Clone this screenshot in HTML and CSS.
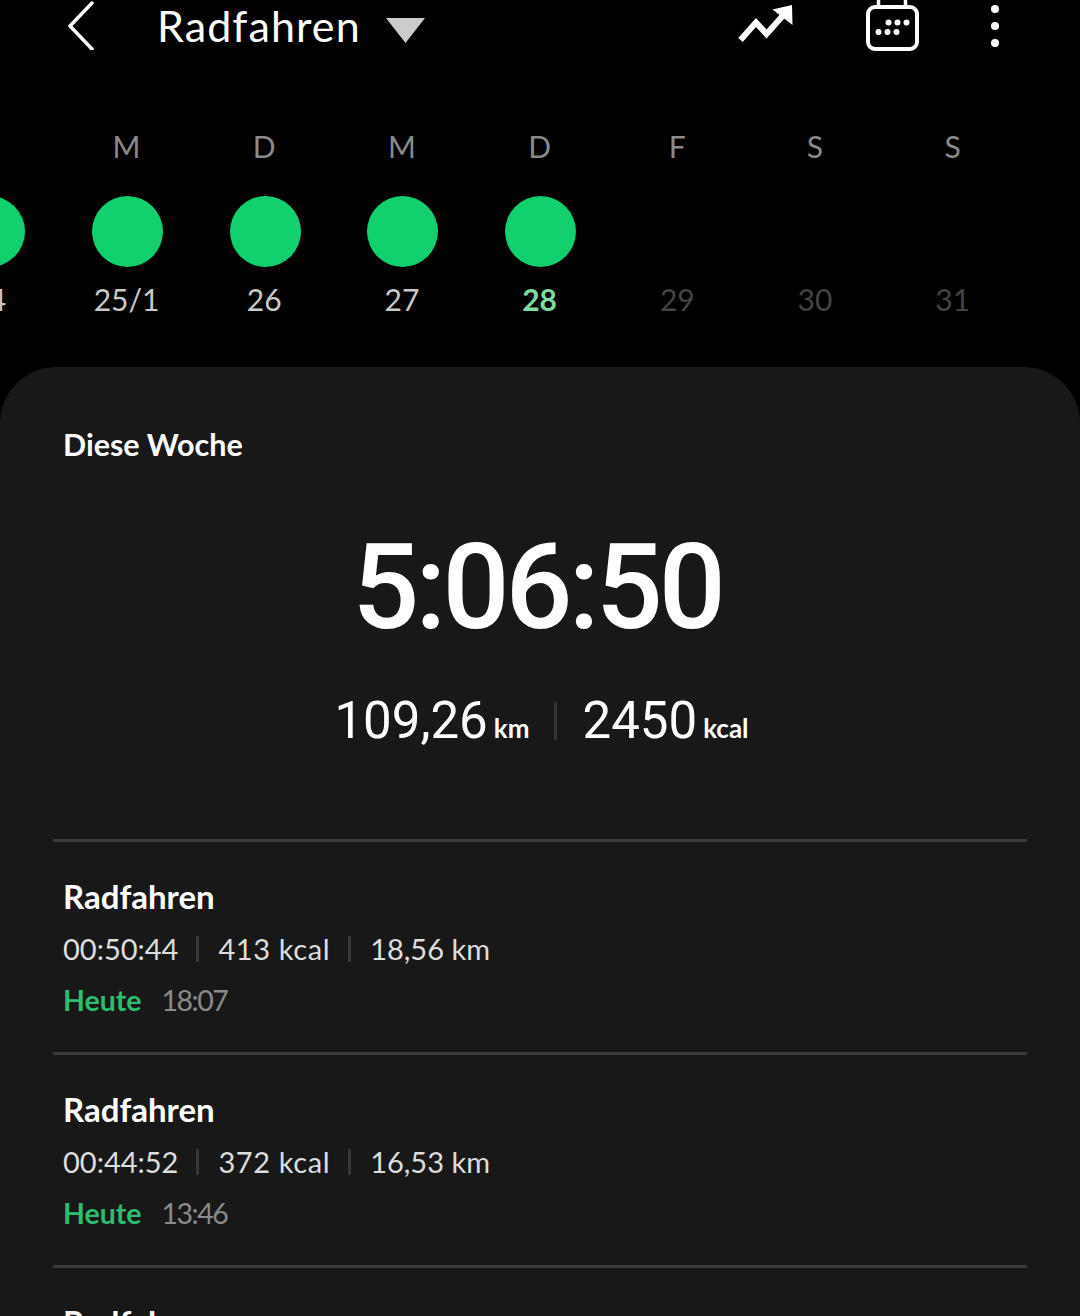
FILE: index.html
```html
<!DOCTYPE html>
<html lang="de">
<head>
  <meta charset="UTF-8">
  <title>Radfahren</title>
  <link rel="stylesheet" href="styles.css">
</head>
<body>
  <div class="header">
    <svg class="back" width="28" height="50" viewBox="0 0 28 50"><path d="M25 3 L3 26 L25 49" fill="none" stroke="#fff" stroke-width="3.5" stroke-linecap="round" stroke-linejoin="round"/></svg>
    <div class="title">Radfahren</div>
    <svg class="caret" width="40" height="26" viewBox="0 0 40 26"><path d="M0 0 H39 L19.500 25 Z" fill="#ccc"/></svg>
    <svg class="trend" width="56" height="40" viewBox="738 4 56 40"><path d="M740.500 40 L756 22.500 L766.500 34 L783 15.500" fill="none" stroke="#fff" stroke-width="6"/><path d="M792 5 L772.500 9.500 L792.500 25 Z" fill="#fff"/></svg>
    <svg class="cal" width="54" height="52" viewBox="865 0 54 52"><path d="M878.500 6 V0 M905.500 6 V0" stroke="#fff" stroke-width="3.500"/><rect x="868" y="7" width="49" height="42" rx="7" fill="none" stroke="#fff" stroke-width="4"/><g fill="#fff"><circle cx="888.500" cy="22.500" r="3"/><circle cx="897.500" cy="22.500" r="3"/><circle cx="906.500" cy="22.500" r="3"/><circle cx="878.500" cy="32" r="3"/><circle cx="887.500" cy="32" r="3"/><circle cx="896.500" cy="32" r="3"/></g></svg>
    <svg class="more" width="10" height="44" viewBox="0 0 10 44"><circle cx="5" cy="5" r="4" fill="#fff"/><circle cx="5" cy="22" r="4" fill="#fff"/><circle cx="5" cy="39" r="4" fill="#fff"/></svg>
  </div>

  <div class="week">
    <div class="day"><div class="letter"></div><div class="dot"></div><div class="date">24</div></div>
    <div class="day"><div class="letter">M</div><div class="dot"></div><div class="date">25/1</div></div>
    <div class="day"><div class="letter">D</div><div class="dot"></div><div class="date">26</div></div>
    <div class="day"><div class="letter">M</div><div class="dot"></div><div class="date">27</div></div>
    <div class="day"><div class="letter">D</div><div class="dot"></div><div class="date today">28</div></div>
    <div class="day"><div class="letter">F</div><div class="nodot"></div><div class="date future">29</div></div>
    <div class="day"><div class="letter">S</div><div class="nodot"></div><div class="date future">30</div></div>
    <div class="day"><div class="letter">S</div><div class="nodot"></div><div class="date future">31</div></div>
  </div>

  <div class="panel">
    <div class="panel-title">Diese Woche</div>
    <div class="total-time">5:06:50</div>
    <div class="totals">
      <span class="num">109,26</span><span class="unit">km</span>
      <span class="sep"></span>
      <span class="num">2450</span><span class="unit">kcal</span>
    </div>

    <div class="ride">
      <div class="ride-name">Radfahren</div>
      <div class="ride-stats"><span class="s1">00:50:44</span><span class="bar"></span><span class="s2">413 kcal</span><span class="bar"></span><span>18,56 km</span></div>
      <div class="ride-when"><span class="when">Heute</span><span class="clock">18:07</span></div>
    </div>
    <div class="ride">
      <div class="ride-name">Radfahren</div>
      <div class="ride-stats"><span class="s1">00:44:52</span><span class="bar"></span><span class="s2">372 kcal</span><span class="bar"></span><span>16,53 km</span></div>
      <div class="ride-when"><span class="when">Heute</span><span class="clock">13:46</span></div>
    </div>
    <div class="ride">
      <div class="ride-name">Radfahren</div>
    </div>
  </div>
</body>
</html>
```

FILE: styles.css
```css
* {
  box-sizing: border-box;
}
html, body {
  margin: 0;
  height: 1316px;
  overflow: hidden;
  background-color: #000;
  color: #fff;
  font-family: "Lato", "Noto Sans", sans-serif;
}
.header {
  display: flex;
  align-items: flex-start;
  height: 55px;
}
.back {
  margin: 0 0 0 67px;
}
.title {
  margin-left: 62px;
  font-size: 43px;
  line-height: 52px;
  width: 229px;
  letter-spacing: 1.1px;
}
.caret {
  margin-top: 18px;
}
.trend {
  margin: 4px 0 0 312px;
}
.cal {
  margin-left: 71px;
}
.more {
  margin: 4px 0 0 71px;
}
.week {
  display: flex;
  margin: 76px 0 0 -79px;
}
.day {
  flex: 0 0 137.700px;
  display: flex;
  flex-direction: column;
  align-items: center;
}
.letter {
  height: 32px;
  margin-right: 2px;
  font-size: 30px;
  line-height: 30px;
  color: #8a8a8a;
}
.dot, .nodot {
  width: 71px;
  height: 71px;
  margin-top: 33px;
  border-radius: 50%;
}
.dot {
  background-color: #12d06e;
}
.date {
  margin: 14px 2px 0 0;
  font-size: 30px;
  line-height: 36px;
  color: #c8c8c8;
}
.today {
  font-weight: 700;
  color: #7fdc9e;
}
.future {
  color: #444;
}
.panel {
  margin-top: 50px;
  height: 949px;
  padding: 0 53px;
  overflow: hidden;
  background-color: #181818;
  border-radius: 56px 56px 0 0;
}
.panel-title {
  padding: 56px 0 0 10px;
  font-size: 30.500px;
  line-height: 42px;
  font-weight: 700;
}
.total-time {
  margin-top: 62px;
  padding-right: 6px;
  height: 122px;
  font-family: "Roboto", sans-serif;
  font-size: 118px;
  font-weight: 500;
  line-height: 122px;
  letter-spacing: -4px;
  text-align: center;
}
.totals {
  display: flex;
  justify-content: center;
  align-items: baseline;
  margin-top: 42px;
  height: 148px;
  line-height: 60px;
  padding-left: 3px;
}
.num {
  font-family: "Roboto", sans-serif;
  font-size: 51px;
}
.unit {
  margin-left: 6px;
  font-size: 26px;
  font-weight: 700;
}
.sep {
  align-self: flex-start;
  width: 3px;
  height: 38px;
  margin: 11px 25px 0;
  background-color: #333;
}
.ride {
  height: 213px;
  padding: 33px 0 0 10px;
  border-top: 3px solid #3a3a3a;
}
.ride-name {
  font-size: 33px;
  line-height: 42px;
  font-weight: 700;
}
.ride-stats {
  display: flex;
  align-items: center;
  margin-top: 11px;
  font-size: 29px;
  line-height: 42px;
  color: #ddd;
}
.s2 {
  letter-spacing: 0.6px;
}
.bar {
  width: 3px;
  height: 26px;
  margin: 0 19px 0 18px;
  background-color: #383838;
}
.ride-when {
  margin-top: 9px;
  font-size: 28.500px;
  line-height: 42px;
}
.when {
  font-weight: 700;
  color: #2dbd6e;
}
.clock {
  margin-left: 20px;
  letter-spacing: -1.500px;
  color: #8a8a8a;
}
```
